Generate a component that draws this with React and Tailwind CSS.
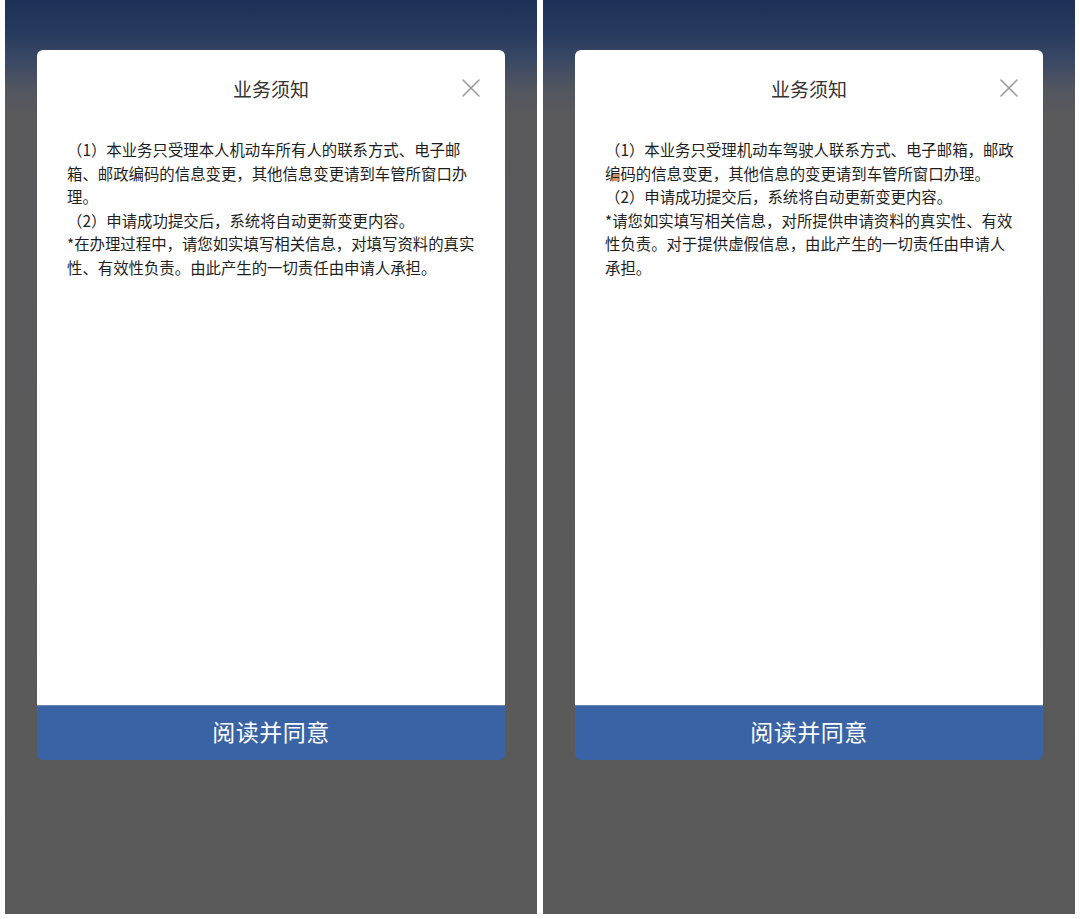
import React from 'react';

const leftLines = [
  '（1）本业务只受理本人机动车所有人的联系方式、电子邮',
  '箱、邮政编码的信息变更，其他信息变更请到车管所窗口办',
  '理。',
  '（2）申请成功提交后，系统将自动更新变更内容。',
  '*在办理过程中，请您如实填写相关信息，对填写资料的真实',
  '性、有效性负责。由此产生的一切责任由申请人承担。',
];

const rightLines = [
  '（1）本业务只受理机动车驾驶人联系方式、电子邮箱，邮政',
  '编码的信息变更，其他信息的变更请到车管所窗口办理。',
  '（2）申请成功提交后，系统将自动更新变更内容。',
  '*请您如实填写相关信息，对所提供申请资料的真实性、有效',
  '性负责。对于提供虚假信息，由此产生的一切责任由申请人',
  '承担。',
];

const CloseIcon = () => (
  <svg width="20" height="20" viewBox="0 0 20 20" fill="none">
    <path d="M2 2L18 18M18 2L2 18" stroke="#9a9a9a" strokeWidth="1.6" strokeLinecap="round" />
  </svg>
);

const NoticeModal = ({ lines }) => (
  <div className="ml-[32px] mt-[50px] w-[468px] rounded-[6px] overflow-hidden">
    <div className="bg-white h-[655px] pl-[30px] pr-[26px]">
      <div className="relative h-[78px] flex items-center justify-center">
        <span className="text-[19px] text-[#333] -ml-[4px]">业务须知</span>
        <div className="absolute right-[-2px] top-[28px]">
          <CloseIcon />
        </div>
      </div>
      <div className="pt-[10px] text-[15.4px] leading-[23.6px] text-[#1e1e1e]">
        {lines.map((l, i) => (
          <div key={i} className="whitespace-nowrap">{l}</div>
        ))}
      </div>
    </div>
    <div className="h-[55px] bg-[#3a63a5] border-t border-[#6f86b0] flex items-center justify-center pb-[3px]">
      <span className="text-[23px] text-white tracking-[0.5px]">阅读并同意</span>
    </div>
  </div>
);

const Phone = ({ lines }) => (
  <div className="w-[532px] h-[914px] bg-[linear-gradient(180deg,#1d3057_0px,#253a5e_30px,#3a4865_60px,#52565f_90px,#59595b_115px,#5a5a5a_100%)]">
    <NoticeModal lines={lines} />
  </div>
);

export default function App() {
  return (
    <div
      className="w-[1080px] h-[919px] bg-white flex gap-[6px] pl-[5px]"
      style={{ fontFamily: '"Noto Sans CJK SC", "Noto Sans", sans-serif' }}
    >
      <Phone lines={leftLines} />
      <Phone lines={rightLines} />
    </div>
  );
}
